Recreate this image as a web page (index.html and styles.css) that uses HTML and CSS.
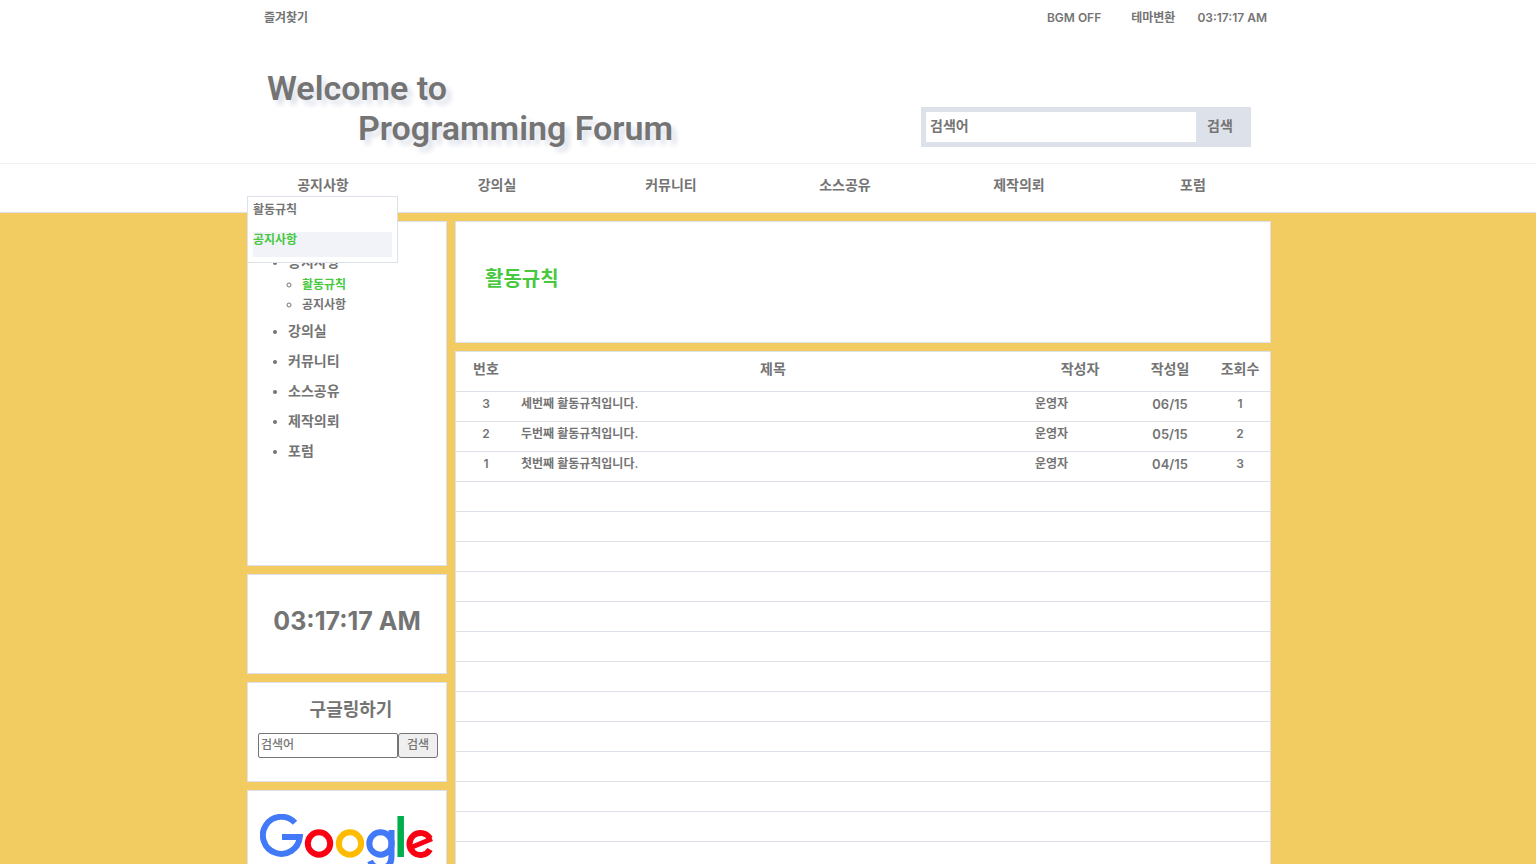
FILE: index.html
```html
<!DOCTYPE html>
<html lang="ko">
<head>
<meta charset="utf-8">
<title>Programming Forum</title>
<link rel="stylesheet" href="styles.css">
</head>
<body>
<header class="site-header">
  <div class="container topbar">
    <a href="#">즐겨찾기</a>
    <div class="topbar-tools">
      <button type="button" class="plain bgm">BGM OFF</button>
      <button type="button" class="plain">테마변환</button>
      <time class="top-clock">03:17:17 AM</time>
    </div>
  </div>
  <div class="container masthead">
    <h1 class="logo"><a href="#"><span>Welcome to</span><span class="logo-second">Programming Forum</span></a></h1>
    <form class="search" role="search">
      <input class="search-input" type="text" placeholder="검색어" aria-label="검색어">
      <button type="button" class="search-button">검색</button>
    </form>
  </div>
</header>
<nav class="main-nav">
  <ul class="container nav-list">
    <li class="nav-item"><a href="#">공지사항</a>
      <ul class="dropdown">
        <li><a href="#">활동규칙</a></li>
        <li class="hovered"><a href="#">공지사항</a></li>
      </ul>
    </li>
    <li class="nav-item"><a href="#">강의실</a></li>
    <li class="nav-item"><a href="#">커뮤니티</a></li>
    <li class="nav-item"><a href="#">소스공유</a></li>
    <li class="nav-item"><a href="#">제작의뢰</a></li>
    <li class="nav-item"><a href="#">포럼</a></li>
  </ul>
</nav>
<div class="page">
  <div class="container columns">
    <aside class="sidebar">
      <section class="card side-menu">
        <ul class="side-list">
          <li class="open"><a href="#">공지사항</a>
            <ul class="side-sub">
              <li><a class="current" href="#">활동규칙</a></li>
              <li><a href="#">공지사항</a></li>
            </ul>
          </li>
          <li><a href="#">강의실</a></li>
          <li><a href="#">커뮤니티</a></li>
          <li><a href="#">소스공유</a></li>
          <li><a href="#">제작의뢰</a></li>
          <li><a href="#">포럼</a></li>
        </ul>
      </section>
      <section class="card clock"><time>03:17:17 AM</time></section>
      <section class="card googling">
        <h2>구글링하기</h2>
        <form class="google-form">
          <input type="text" placeholder="검색어" aria-label="구글 검색어">
          <button type="button">검색</button>
        </form>
      </section>
      <section class="card google-card">
        <a href="#" aria-label="Google">
          <svg class="google-logo" viewBox="0 0 174 58" fill="none" stroke-width="6">
            <path stroke="#4279f7" d="M35 8.800A18.500 18.500 0 1 0 39.800 23H22"/>
            <circle cx="59" cy="29.500" r="11.200" stroke="#fb0012"/>
            <circle cx="90" cy="29.500" r="11.200" stroke="#ffbb00"/>
            <circle cx="120.500" cy="29.500" r="11.200" stroke="#4279f7"/>
            <path stroke="#4279f7" d="M131.500 16V42Q131.500 54 121 54Q113 54 110 47"/>
            <path stroke="#00ae4b" stroke-width="6.500" d="M140.700 2V43"/>
            <path stroke="#fb0012" d="M170 24.500A11 11 0 1 0 170 35.500"/>
            <path stroke="#fb0012" stroke-width="5" d="M151 33.500L172 24.800"/>
          </svg>
        </a>
      </section>
    </aside>
    <main class="content">
      <section class="card page-title"><h2>활동규칙</h2></section>
      <section class="card board">
        <table>
          <colgroup><col class="col-no"><col><col class="col-author"><col class="col-date"><col class="col-views"></colgroup>
          <thead><tr><th>번호</th><th>제목</th><th>작성자</th><th>작성일</th><th>조회수</th></tr></thead>
          <tbody>
            <tr><td>3</td><td class="left"><a href="#">세번째 활동규칙입니다.</a></td><td class="left">운영자</td><td class="date">06/15</td><td>1</td></tr>
            <tr><td>2</td><td class="left"><a href="#">두번째 활동규칙입니다.</a></td><td class="left">운영자</td><td class="date">05/15</td><td>2</td></tr>
            <tr><td>1</td><td class="left"><a href="#">첫번째 활동규칙입니다.</a></td><td class="left">운영자</td><td class="date">04/15</td><td>3</td></tr>
            <tr><td colspan="5"></td></tr>
            <tr><td colspan="5"></td></tr>
            <tr><td colspan="5"></td></tr>
            <tr><td colspan="5"></td></tr>
            <tr><td colspan="5"></td></tr>
            <tr><td colspan="5"></td></tr>
            <tr><td colspan="5"></td></tr>
            <tr><td colspan="5"></td></tr>
            <tr><td colspan="5"></td></tr>
            <tr><td colspan="5"></td></tr>
            <tr><td colspan="5"></td></tr>
            <tr><td colspan="5"></td></tr>
            <tr><td colspan="5"></td></tr>
          </tbody>
        </table>
      </section>
    </main>
  </div>
</div>
</body>
</html>
```
FILE: styles.css
```css
* { box-sizing: border-box; }

body {
  margin: 0;
  background: #f2cb61;
  color: #747474;
  font-family: "Inter", "Noto Sans CJK KR", sans-serif;
  font-size: 12px;
  font-weight: 600;
  line-height: 20px;
}

a { color: inherit; text-decoration: none; }
ul { margin: 0; padding: 0; list-style: none; }
h1, h2 { margin: 0; }
button, input { font: inherit; color: inherit; }
input::placeholder { color: #757575; opacity: 1; }

.site-header, .main-nav, .page { padding-right: 18px; }

.container { width: 100%; max-width: 1024px; margin: 0 auto; }

.site-header { background: #fff; border-bottom: 1px solid #f1f3f6; }
.topbar { display: flex; justify-content: space-between; padding: 8px 4px 0 17px; }
.topbar-tools { display: flex; }
.plain { border: 0; padding: 0; background: none; }
.bgm { margin-right: 30px; }
.top-clock { margin-left: 22px; }

.masthead { display: flex; justify-content: space-between; align-items: flex-end; padding: 40px 20px 15px; }
.logo { font-family: Roboto, sans-serif; font-size: 34px; line-height: 40px; font-weight: 600; text-shadow: 5px 5px 5px #dde1ea; }
.logo span { display: block; }
.logo .logo-second { padding-left: 91px; }

.search { display: flex; width: 330px; height: 40px; margin-bottom: 1px; padding: 5px; background: #dde1ea; }
.search-input { flex: 1; min-width: 0; border: 0; padding: 0 4px 2px; background: #fff; font-size: 14px; }
.search-button { width: 50px; border: 0; padding: 0 2px 2px 0; background: none; font-size: 14px; }

.main-nav { background: #fff; border-bottom: 1px solid #dde1ea; }
.nav-list { display: flex; gap: 22px; }
.nav-item { position: relative; width: 152px; padding: 11px 0 17px; text-align: center; font-size: 14px; }
.dropdown { position: absolute; top: 32px; left: 0; width: 151px; padding: 5px; background: #fff; border: 1px solid #dde1ea; text-align: left; font-size: 12px; font-weight: 700; line-height: 15px; z-index: 2; }
.dropdown li { height: 25px; }
.dropdown li + li { margin-top: 5px; }
.hovered { background: #f1f3f8; color: #47c83e; }

.page { padding-top: 8px; padding-bottom: 8px; }
.columns { display: flex; align-items: flex-start; gap: 8px; }
.sidebar { display: flex; flex-direction: column; gap: 8px; width: 200px; }
.content { display: flex; flex: 1; flex-direction: column; gap: 8px; min-width: 0; }
.card { background: #fff; border: 1px solid #dde1ea; }

.side-menu { min-height: 345px; padding: 30px 0 30px 40px; }
.side-list { list-style: disc; font-size: 14px; }
.side-list > li { margin-bottom: 10px; }
.side-list > .open { margin-bottom: 6px; }
.side-list > li::marker { font-size: 12px; }
.side-sub { margin-top: 3px; padding-left: 14px; list-style: circle; font-size: 12px; font-weight: 700; }
.current { color: #47c83e; }

.clock { padding: 31px 0 37px; text-align: center; font-size: 25px; font-weight: 700; line-height: 30px; }
.googling { height: 100px; padding: 12px 8px 0 10px; text-align: center; }
.googling h2 { margin-bottom: 8px; padding-left: 6px; font-size: 18px; line-height: 30px; }
.google-form { display: flex; height: 25px; }
.google-form input { flex: 1; min-width: 0; padding: 0 2px 2px; border: 1px solid #747474; border-radius: 2px; font-weight: 500; }
.google-form button { width: 40px; padding: 0 0 2px; border: 1px solid #747474; border-radius: 3px; background: #efefef; font-weight: 500; }
.google-card { padding: 23px 12px; }
.google-logo { display: block; width: 100%; height: auto; }

.page-title { padding: 43px 29px 48px; color: #47c83e; }
.page-title h2 { font-size: 20px; line-height: 29px; }

.board table { width: 100%; border-collapse: separate; border-spacing: 0; table-layout: fixed; }
.col-no, .col-views { width: 60px; }
.col-author { width: 100px; }
.col-date { width: 80px; }
.board th { height: 40px; padding: 0 0 6px; border-bottom: 1px solid #dde1ea; font-size: 14px; font-weight: 600; }
.board td { height: 30px; padding: 0 5px 5px; border-bottom: 1px solid #dde1ea; text-align: center; }
.board .left { text-align: left; }
.board .date { font-size: 13px; }
```
